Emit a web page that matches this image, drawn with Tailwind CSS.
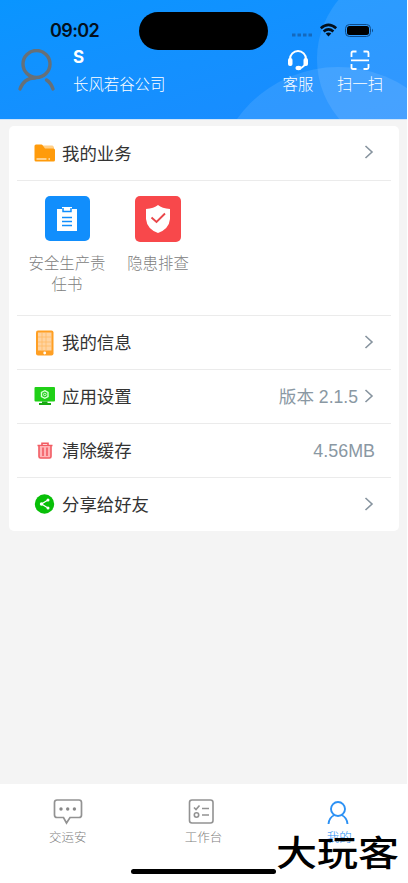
<!DOCTYPE html>
<html lang="zh-CN">
<head>
<meta charset="utf-8">
<meta name="viewport" content="width=device-width, initial-scale=1">
<title>我的</title>
<script src="https://cdn.jsdelivr.net/npm/@tailwindcss/browser@4"></script>
</head>
<body class="w-[408px] h-[883px] overflow-hidden bg-white font-['Liberation_Sans','Noto_Sans_CJK_SC',sans-serif]">
<div class="relative flex flex-col w-[407px] h-[883px] bg-[#f4f4f4]">
  <header class="relative h-[119px] shrink-0 overflow-hidden bg-linear-to-br from-[#0995ff] to-[#1b8bff] text-white">
    <div class="absolute left-[317px] top-[-33px] size-[184px] rounded-full bg-white/10"></div>
    <div class="absolute left-[214px] top-[67px] size-[248px] rounded-full bg-white/10"></div>
    <div class="absolute left-[139px] top-[12px] w-[129px] h-[38px] rounded-full bg-black"></div>
    <div class="relative flex h-[48px] pt-[20px] pl-[50px] text-black">
      <span class="w-[60px] font-['Inter'] font-semibold text-[18px] tracking-[-0.6px] leading-[22px] text-[#03101d]">09:02</span>
      <svg class="absolute left-[291px] top-[23px]" width="84" height="15" viewBox="0 0 84 15">
        <g fill="#1469bd"><rect x="1" y="10.500" width="3.500" height="3"/><rect x="6.500" y="10.500" width="3.500" height="3"/><rect x="12" y="10.500" width="3.500" height="3"/><rect x="17.500" y="10.500" width="3.500" height="3"/></g>
        <g fill="none" stroke="#03101d" stroke-width="2.600"><path d="M29.800 5.200Q37.500-1.600 45.200 5.200M32.600 8.500Q37.500 4.300 42.400 8.500"/></g>
        <path d="M34.700 10.600Q37.500 8.400 40.300 10.600L37.500 13.500Z" fill="#03101d"/>
        <rect x="54.500" y="1.500" width="25" height="12" rx="4" fill="none" stroke="#0d4b8a"/>
        <rect x="56" y="3" width="22" height="9" rx="2.500" fill="#000"/>
        <path d="M81 5.500Q83 7.500 81 9.500Z" fill="#0d4b8a"/>
      </svg>
    </div>
    <div class="relative flex">
      <svg class="ml-[17px] mt-px" width="40" height="43" viewBox="0 0 40 43" fill="none" stroke="#667078" stroke-width="3.400" stroke-linecap="round"><circle cx="19.500" cy="15" r="13.500"/><path d="M3 40Q7 29 18 29M29.500 31Q34 34 36 40"/></svg>
      <div class="ml-[16px] w-[110px]">
        <p class="font-['Inter'] font-bold text-[17px] leading-[18px]">S</p>
        <p class="mt-[7px] text-[15.400px] leading-[24px] whitespace-nowrap font-light">长风若谷公司</p>
      </div>
      <div class="ml-[94px] w-[42px] flex flex-col items-center">
        <svg class="mt-px" width="22" height="22" viewBox="0 0 22 22" fill="none" stroke="#fff"><path d="M3 12V10A8 8 0 0 1 19 10V12Q18.500 18 12 19.500" stroke-width="2"/><rect x="1" y="9" width="4.500" height="8" rx="2" fill="#fff" stroke="none"/><rect x="16.500" y="9" width="4.500" height="8" rx="2" fill="#fff" stroke="none"/><ellipse cx="11.500" cy="19" rx="3" ry="2.200" fill="#fff" stroke="none"/></svg>
        <p class="mt-[2px] text-[15.400px] leading-[24px] whitespace-nowrap font-light">客服</p>
      </div>
      <div class="ml-[17px] w-[48px] flex flex-col items-center">
        <svg class="mt-[2px]" width="20" height="21" viewBox="0 0 20 21" fill="none" stroke="#fff" stroke-width="1.800"><path d="M1.500 7V3Q1.500 1.500 3 1.500H6.500M13.500 1.500H17Q18.500 1.500 18.500 3V7M18.500 14V17.500Q18.500 19 17 19H13.500M6.500 19H3Q1.500 19 1.500 17.500V14M1 10.400H19"/></svg>
        <p class="mt-[2px] text-[15.400px] leading-[24px] whitespace-nowrap font-light">扫一扫</p>
      </div>
    </div>
  </header>
  <div class="h-px bg-[#cfe5fa]"></div>
  <main class="mx-[9px] mt-[6px] h-[405px] w-[390px] rounded-[5px] bg-white px-[8px] text-[17.400px] text-[#333]">
    <section class="h-[190px] border-b border-[#ebebeb]">
      <div class="flex h-[55px] items-center border-b border-[#ebebeb] pl-[17px] pr-[17px]">
        <svg width="22" height="20" viewBox="0 0 22 20"><path d="M9 2.500H18.500L20 4V8H9Z" fill="#ffd08a"/><path d="M2 1.500H7.500Q8.500 1.500 9.500 3.500L11 5.500H19.500Q21 5.500 21 7V17Q21 18.500 19.500 18.500H2Q.500 18.500 .500 17V3Q.500 1.500 2 1.500" fill="#ff9b0b"/><path d="M2.500 16H12.500M14.500 16H16" stroke="#ffe3b8" stroke-width="1.500"/></svg>
        <span class="ml-[6px] pt-[2px]">我的业务</span>
        <svg class="ml-auto -mt-[2px]" width="10" height="16" viewBox="0 0 10 16" fill="none" stroke="#87949f" stroke-width="1.600"><path d="M1.500 2L8 8L1.500 14"/></svg>
      </div>
      <div class="flex pt-[15px] pl-[5px] text-center text-[15.400px] leading-[21px] text-[#808080] font-light">
        <div class="flex w-[90px] flex-col items-center">
          <div class="flex size-[45px] items-center justify-center rounded-[5px] bg-[#118efc]"><svg width="22" height="26" viewBox="0 0 22 26"><path d="M1 3H6V1H16V3H21V25H1Z" fill="#fff"/><path d="M7 2V5.500H15V2M6 11.500H16M6 15.500H16M6 19.500H16" fill="none" stroke="#118efc" stroke-width="1.500"/></svg></div>
          <p class="mt-[12px]">安全生产责<br>任书</p>
        </div>
        <div class="flex w-[92px] flex-col items-center">
          <div class="flex size-[46px] items-center justify-center rounded-[5px] bg-[#f8484b]"><svg width="26" height="30" viewBox="0 0 26 30"><path d="M13 1Q17 4.500 25 5V15Q24 25 13 29Q2 25 1 15V5Q9 4.500 13 1Z" fill="#fff"/><path d="M6.500 13.500L11.500 18L20 9.500" fill="none" stroke="#e9474a" stroke-width="1.900"/></svg></div>
          <p class="mt-[11px]">隐患排查</p>
        </div>
      </div>
    </section>
    <div class="flex h-[54px] items-center border-b border-[#ebebeb] pl-[17px] pr-[17px]">
      <svg width="22" height="26" viewBox="0 0 22 26"><rect x="2" y=".500" width="17.500" height="25" rx="2" fill="#ff9f23"/><rect x="4" y="2.500" width="13.500" height="18" fill="#ffd3a0"/><path d="M8 2.500V20.500M12 2.500V20.500M4 7H17.500M4 12H17.500M4 16H17.500" stroke="#ffb85f" stroke-width=".700"/><circle cx="10.700" cy="23" r="1.400" fill="#fff"/></svg>
      <span class="ml-[6px] pt-[2px]">我的信息</span>
      <svg class="ml-auto -mt-[2px]" width="10" height="16" viewBox="0 0 10 16" fill="none" stroke="#87949f" stroke-width="1.600"><path d="M1.500 2L8 8L1.500 14"/></svg>
    </div>
    <div class="flex h-[54px] items-center border-b border-[#ebebeb] pl-[17px] pr-[17px]">
      <svg class="-mt-[2px]" width="22" height="20" viewBox="0 0 22 20"><rect x=".500" y="1" width="20.500" height="14.500" rx="1" fill="#20d017"/><path d="M8 15.500H13.500V17H17V19H5V17H8Z" fill="#17a912"/><path d="M10.800 4.700L14 6.500V10.500L10.800 12.300L7.500 10.500V6.500Z" fill="none" stroke="#d9ffd8" stroke-width="1.400"/><circle cx="10.800" cy="8.500" r="1.300" fill="none" stroke="#d9ffd8"/></svg>
      <span class="ml-[6px] pt-[2px]">应用设置</span>
      <span class="ml-auto mr-[6px] pt-[2px] text-[17.600px] text-[#8a98a3]">版本 2.1.5</span>
      <svg class="-mt-[2px]" width="10" height="16" viewBox="0 0 10 16" fill="none" stroke="#87949f" stroke-width="1.600"><path d="M1.500 2L8 8L1.500 14"/></svg>
    </div>
    <div class="flex h-[54px] items-center border-b border-[#ebebeb] pl-[17px] pr-[16px]">
      <svg width="22" height="18" viewBox="0 0 22 18" fill="none" stroke="#f25c63" stroke-width="1.600"><path d="M3.500 3.500H18.500M8 3V1.200H14V3"/><path d="M5 4V14.500Q5 16 6.500 16H15.500Q17 16 17 14.500V4" fill="#ffb4b7"/><path d="M9 5.500V14M13 5.500V14"/></svg>
      <span class="ml-[6px] pt-[2px]">清除缓存</span>
      <span class="ml-auto pt-[2px] text-[17.900px] text-[#8a98a3]">4.56MB</span>
    </div>
    <div class="flex h-[54px] items-center pl-[17px] pr-[17px]">
      <svg class="-mt-[2px]" width="22" height="20" viewBox="0 0 22 20"><circle cx="10.500" cy="10" r="9.700" fill="#08bf08"/><path d="M14 6L7.500 10L14 14" fill="none" stroke="#fff" stroke-width="1.300"/><g fill="#fff"><circle cx="14" cy="6" r="1.500"/><circle cx="7.500" cy="10" r="1.700"/><circle cx="14" cy="14" r="1.500"/></g></svg>
      <span class="ml-[6px] pt-px">分享给好友</span>
      <svg class="ml-auto -mt-[2px]" width="10" height="16" viewBox="0 0 10 16" fill="none" stroke="#87949f" stroke-width="1.600"><path d="M1.500 2L8 8L1.500 14"/></svg>
    </div>
  </main>
  <nav class="mt-auto grid h-[99px] grid-cols-3 bg-white pt-[14px] text-center text-[12.500px] leading-[18px] text-[#808080] font-light">
    <div class="flex flex-col items-center">
      <svg width="30" height="28" viewBox="0 0 30 28" fill="none" stroke="#929292" stroke-width="1.700"><path d="M4 2H26Q28.500 2 28.500 4.500V17Q28.500 19.500 26 19.500H17L13.500 25L10.500 19.500H4Q1.500 19.500 1.500 17V4.500Q1.500 2 4 2Z"/><g fill="#888" stroke="none"><circle cx="8" cy="11" r="1.700"/><circle cx="14.700" cy="11" r="1.700"/><circle cx="21.400" cy="11" r="1.700"/></g></svg>
      <span class="mt-[3px]">交运安</span>
    </div>
    <div class="flex flex-col items-center">
      <svg class="-ml-[2px]" width="28" height="28" viewBox="0 0 28 28" fill="none" stroke="#929292" stroke-width="1.600"><rect x="1.500" y="2" width="23.500" height="23" rx="2.500"/><path d="M6 9.500L8 11.500L11.500 7.500M14 10.500H21M14 17H21"/><circle cx="8.500" cy="17" r="2.200"/></svg>
      <span class="mt-[3px]">工作台</span>
    </div>
    <div class="flex flex-col items-center text-[#2c91f4]">
      <svg class="-ml-[2px]" width="24" height="28" viewBox="0 0 24 28" fill="none" stroke="#2c91f4" stroke-width="1.900"><circle cx="12" cy="11" r="7"/><path d="M2.500 26Q3 19.500 8.500 17M15.500 17Q21 19.500 21.500 26"/></svg>
      <span class="mt-[3px]">我的</span>
    </div>
  </nav>
  <div class="absolute left-[131px] top-[869px] h-[5px] w-[145px] rounded-full bg-black"></div>
  <div class="absolute left-[276px] top-[826px] scale-y-[0.87] whitespace-nowrap font-['Noto_Sans_CJK_SC',sans-serif] text-[41px] leading-[48px] font-medium text-black">大玩客</div>
</div>
</body>
</html>
